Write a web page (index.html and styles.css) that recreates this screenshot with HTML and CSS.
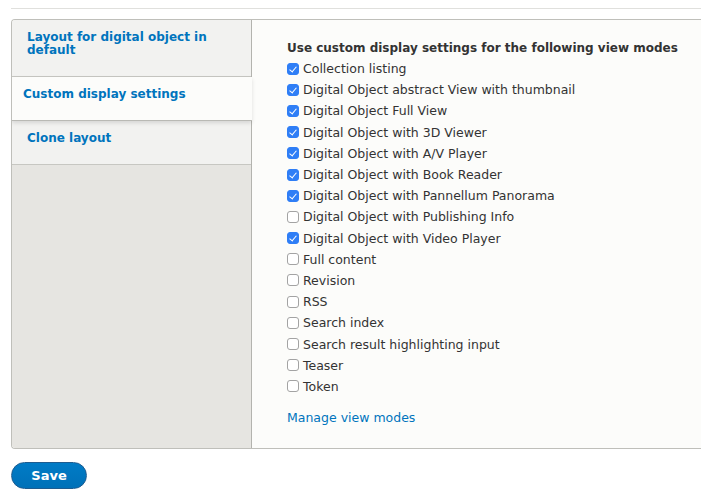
FILE: index.html
```html
<!DOCTYPE html>
<html>
<head>
<meta charset="utf-8">
<link rel="stylesheet" href="styles.css">
</head>
<body>
<div class="page">
  <hr class="topline">
  <div class="vtabs">
    <ul class="tabs">
      <li class="tab"><a href="#">Layout for digital object in default</a></li>
      <li class="tab active"><a href="#">Custom display settings</a></li>
      <li class="tab"><a href="#">Clone layout</a></li>
    </ul>
    <div class="pane">
      <div class="label">Use custom display settings for the following view modes</div>
      <ul class="checks">
        <li><span class="cb on"></span>Collection listing</li>
        <li><span class="cb on"></span>Digital Object abstract View with thumbnail</li>
        <li><span class="cb on"></span>Digital Object Full View</li>
        <li><span class="cb on"></span>Digital Object with 3D Viewer</li>
        <li><span class="cb on"></span>Digital Object with A/V Player</li>
        <li><span class="cb on"></span>Digital Object with Book Reader</li>
        <li><span class="cb on"></span>Digital Object with Pannellum Panorama</li>
        <li><span class="cb"></span>Digital Object with Publishing Info</li>
        <li><span class="cb on"></span>Digital Object with Video Player</li>
        <li><span class="cb"></span>Full content</li>
        <li><span class="cb"></span>Revision</li>
        <li><span class="cb"></span>RSS</li>
        <li><span class="cb"></span>Search index</li>
        <li><span class="cb"></span>Search result highlighting input</li>
        <li><span class="cb"></span>Teaser</li>
        <li><span class="cb"></span>Token</li>
      </ul>
      <a class="manage" href="#">Manage view modes</a>
    </div>
  </div>
  <button class="save">Save</button>
</div>
</body>
</html>
```

FILE: styles.css
```css
html, body {
  margin: 0;
  padding: 0;
  background: #fff;
}
body {
  font-family: "DejaVu Sans", "Liberation Sans", sans-serif;
  font-size: 12px;
  color: #333;
}
.page {
  padding: 8px 0 0 11px;
}
.topline {
  margin: 0;
  border: 0;
  border-top: 1px solid #e0e0dd;
  height: 0;
}
.vtabs {
  margin-top: 10px;
  display: flex;
  border: 1px solid #bfbfba;
  border-right: 0;
  border-radius: 4px 0 0 4px;
  height: 430px;
  box-sizing: border-box;
  overflow: hidden;
}
.tabs {
  list-style: none;
  margin: 0;
  padding: 0;
  width: 239px;
  flex: none;
  background: #e6e5e1;
  border-right: 1px solid #b3b3ae;
}
.tab {
  background: #f2f2f0;
  border-bottom: 1px solid #c7c7c2;
  padding: 11px 15px 0 15px;
  height: 57px;
  box-sizing: border-box;
}
.tab + .tab { height: 44px; }
.tab a {
  color: #0074bd;
  font-weight: bold;
  text-decoration: none;
  font-size: 12px;
  line-height: 13px;
  display: block;
}
.tab.active {
  background: #fcfcfa;
  margin-right: -1px;
  padding-left: 11px;
  padding-top: 11px;
  position: relative;
  box-shadow: 0 2px 4px rgba(0,0,0,0.12);
  border-bottom: 1px solid #b9b9b4;
}
.pane {
  flex: 1;
  background: #fcfcfa;
  padding: 20px 0 0 35px;
}
.label {
  font-weight: bold;
  font-size: 12px;
  color: #333;
  line-height: 16px;
  margin-bottom: 2px;
}
.checks {
  list-style: none;
  margin: 0;
  padding: 0;
}
.checks li {
  display: flex;
  align-items: center;
  height: 21.2px;
  font-size: 12.5px;
  color: #333;
}
.cb {
  width: 12px;
  height: 12px;
  border: 1px solid #a3a3a3;
  border-radius: 3px;
  background: #fff;
  margin-right: 4px;
  flex: none;
  box-sizing: border-box;
  position: relative;
}
.cb.on {
  background: #2f7ef6;
  border-color: #2f7ef6;
}
.cb.on::after {
  content: "";
  position: absolute;
  left: 3px;
  top: 1px;
  width: 3px;
  height: 6px;
  border: solid #fff;
  border-width: 0 1.5px 1.5px 0;
  transform: rotate(40deg);
}
.manage {
  display: inline-block;
  margin-top: 13px;
  color: #0074bd;
  text-decoration: none;
  font-size: 12.5px;
}
.save {
  margin-top: 13px;
  width: 76px;
  height: 27px;
  border-radius: 14px;
  border: 1px solid #1e5c90;
  background: linear-gradient(#007bc6, #0071b8);
  color: #fff;
  font-family: "DejaVu Sans", sans-serif;
  font-weight: bold;
  font-size: 13px;
  padding: 0;
}
```
